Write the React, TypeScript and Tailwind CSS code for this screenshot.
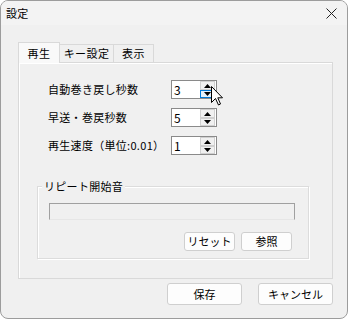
import React from "react";

const font = "font-['Noto_Sans_CJK_JP','Noto_Sans',sans-serif]";

function Tri({ up }: { up: boolean }) {
  return (
    <svg width="7" height="4" viewBox="0 0 7 4">
      {up ? <polygon points="0,4 7,4 3.5,0" fill="#000" /> : <polygon points="0,0 7,0 3.5,4" fill="#000" />}
    </svg>
  );
}

function Spin({ value, hover }: { value: string; hover?: boolean }) {
  return (
    <div className="flex h-[19px] w-[46px] items-stretch border border-[#8a8a8a] bg-white">
      <div className="flex-1 pl-[2px] text-[12px] leading-[17px] text-black">{value}</div>
      <div className="mr-px flex w-[15px] flex-col">
        <div className="flex h-[9px] items-center justify-center border border-[#d0d0d0] bg-[#f0f0f0]">
          <Tri up />
        </div>
        <div
          className={
            hover
              ? "flex h-[8px] items-center justify-center border border-[#0078d7] bg-[#e5f1fb]"
              : "flex h-[8px] items-center justify-center border border-[#d0d0d0] bg-[#f0f0f0]"
          }
        >
          <Tri up={false} />
        </div>
      </div>
    </div>
  );
}

function Btn({ label, w, h }: { label: string; w: string; h: string }) {
  return (
    <div
      className={`flex ${w} ${h} items-center justify-center rounded-[3px] border border-[#cfcfcf] bg-[#fdfdfd] text-[11px] text-black`}
    >
      {label}
    </div>
  );
}

export default function App() {
  return (
    <div className={`${font} relative flex h-[319px] w-[348px] flex-col overflow-hidden rounded-[8px] border border-[#9c9c9c] bg-[#f0f0f0] text-black`}>
      {/* title bar */}
      <div className="flex h-[24px] items-center justify-between bg-[#f3f3f3]">
        <span className="pl-[5px] text-[11px] tracking-[0.2px]">設定</span>
        <svg className="mr-[10px]" width="11" height="11" viewBox="0 0 11 11">
          <path d="M0.5 0.5 L10.5 10.5 M10.5 0.5 L0.5 10.5" stroke="#222" strokeWidth="1" />
        </svg>
      </div>

      {/* tabs */}
      <div className="ml-[17px] mt-[17px] flex h-[20px] items-end text-[11px] tracking-[0.4px]">
        <div className="relative z-10 -mb-px flex h-[21px] w-[42px] items-center justify-center border border-b-0 border-[#d9d9d9] bg-[#f9f9f9]">
          再生
        </div>
        <div className="flex h-[18px] w-[54px] items-center justify-center border border-l-0 border-b-0 border-[#d9d9d9] bg-[#f0f0f0]">
          キー設定
        </div>
        <div className="flex h-[18px] w-[40px] items-center justify-center border border-l-0 border-b-0 border-[#d9d9d9] bg-[#f0f0f0]">
          表示
        </div>
      </div>

      {/* tab panel */}
      <div className="ml-[17px] flex h-[217px] w-[315px] flex-col border border-[#d9d9d9] bg-[#f0f0f0] pl-[29px] pt-[17px] shadow-[inset_1px_1px_0_#ffffff]">
        <div className="flex flex-col gap-[9px] text-[11px] tracking-[0.3px]">
          <div className="flex h-[19px] items-center">
            <span className="w-[123px]">自動巻き戻し秒数</span>
            <Spin value="3" hover />
          </div>
          <div className="flex h-[19px] items-center">
            <span className="w-[123px]">早送・巻戻秒数</span>
            <Spin value="5" />
          </div>
          <div className="flex h-[19px] items-center">
            <span className="w-[123px] whitespace-nowrap">再生速度（単位:0.01）</span>
            <Spin value="1" />
          </div>
        </div>

        {/* group box */}
        <div className="relative -ml-[11px] mt-[31px] flex h-[73px] w-[272px] flex-col border border-[#dcdcdc] pl-[11px] pr-[16px] pt-[16px] shadow-[inset_1px_1px_0_#ffffff,1px_1px_0_#ffffff]">
          <span className="absolute -top-[8px] left-[4px] bg-[#f0f0f0] px-[2px] text-[11px] leading-[14px] tracking-[0.3px]">
            リピート開始音
          </span>
          <div className="h-[17px] w-[246px] border border-[#a0a0a0] border-b-[#e6e6e6] bg-[#f0f0f0]" />
          <div className="mt-[12px] flex justify-end gap-[6px]">
            <Btn label="リセット" w="w-[51px]" h="h-[19px]" />
            <Btn label="参照" w="w-[51px]" h="h-[19px]" />
          </div>
        </div>
      </div>

      {/* bottom buttons */}
      <div className="mt-[4px] flex justify-end gap-[16px] pr-[14px]">
        <Btn label="保存" w="w-[75px]" h="h-[22px]" />
        <Btn label="キャンセル" w="w-[75px]" h="h-[22px]" />
      </div>

      {/* mouse cursor */}
      <svg className="absolute left-[210px] top-[85px]" width="13" height="20" viewBox="0 0 13 20">
        <path d="M0.5 0.5 L0.5 16.5 L4.5 12.5 L7.5 19 L9.5 18 L6.8 11.8 L11.5 11.8 Z" fill="#fff" stroke="#000" strokeWidth="1" strokeLinejoin="miter" />
      </svg>
    </div>
  );
}
